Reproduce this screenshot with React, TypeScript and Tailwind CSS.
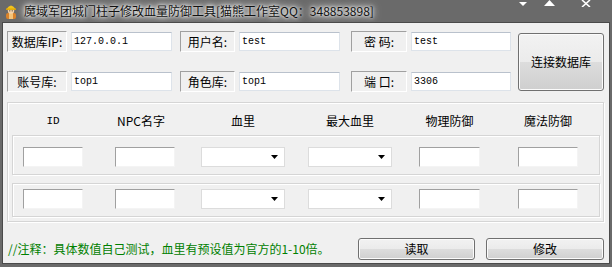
import React from "react";

const Label = ({ text, w, className = "" }: { text: string; w: string; className?: string }) => (
  <div
    className={`${w} h-[21px] flex items-center justify-center border border-t-[#a0a0a0] border-l-[#a0a0a0] border-r-[#ffffff] border-b-[#ffffff] text-[12px] leading-[14px] text-black whitespace-nowrap ${className}`}
  >
    {text}
  </div>
);

const TopInput = ({ value, w, className = "" }: { value: string; w: string; className?: string }) => (
  <div
    className={`${w} h-[19px] bg-white border border-[#dde3ea] border-t-[#b9c1cc] flex items-center pl-[2px] font-['Liberation_Mono',monospace] text-[10px] text-black ${className}`}
  >
    {value}
  </div>
);

const SunkenBox = ({ className = "" }: { className?: string }) => (
  <div
    className={`h-[20px] bg-white border border-t-[#a0a0a0] border-l-[#a0a0a0] border-r-[#f4f4f4] border-b-[#f4f4f4] ${className}`}
  />
);

const Combo = ({ className = "" }: { className?: string }) => (
  <div
    className={`w-[84px] h-[20px] bg-white border border-[#dcdcdc] flex items-center justify-end pr-[6px] ${className}`}
  >
    <svg width="7" height="4" viewBox="0 0 7 4">
      <polygon points="0,0 7,0 3.5,4" fill="#000" />
    </svg>
  </div>
);

const Btn = ({ text, className = "" }: { text: string; className?: string }) => (
  <div
    className={`rounded-[3px] border border-[#707070] bg-[linear-gradient(#f2f2f2,#ebebeb_50%,#dddddd_50%,#cfcfcf)] shadow-[inset_0_0_0_1px_#fbfbfb] flex items-center justify-center text-[12px] text-black ${className}`}
  >
    {text}
  </div>
);

const DataRow = ({ className = "" }: { className?: string }) => (
  <div
    className={`ml-[4px] mr-[3px] border border-[#d5d5d5] shadow-[inset_1px_1px_0_#ffffff,1px_1px_0_#ffffff] flex items-start ${className}`}
  >
    <SunkenBox className="ml-[10px] w-[60px]" />
    <SunkenBox className="ml-[32px] w-[60px]" />
    <Combo className="ml-[26px]" />
    <Combo className="ml-[23px]" />
    <SunkenBox className="ml-[27px] w-[61px]" />
    <SunkenBox className="ml-[38px] w-[60px]" />
  </div>
);

const Header = ({ text, className = "" }: { text: string; className?: string }) => (
  <div className={`flex justify-center whitespace-nowrap ${className}`}>{text}</div>
);

export default function App() {
  return (
    <div className="w-[612px] h-[267px] bg-[#6a6a6a] flex flex-col overflow-hidden font-['Noto_Sans_CJK_SC',sans-serif]">
      {/* Title bar */}
      <div className="h-[22px] flex items-start shrink-0">
        <svg className="ml-[4px] mt-[3px]" width="14" height="16" viewBox="0 0 14 16">
          <rect x="2" y="10" width="10" height="6" rx="2" fill="#d9822b" />
          <rect x="5" y="10" width="4" height="6" fill="#f3c37a" />
          <circle cx="7" cy="7.5" r="3.2" fill="#f6d2a6" />
          <path d="M2.5 6 Q7 -1 11.5 6 Z" fill="#f2c21c" />
          <rect x="2" y="5.5" width="10" height="1.4" fill="#e0a800" />
          <circle cx="5.8" cy="7.8" r="0.6" fill="#333" />
          <circle cx="8.2" cy="7.8" r="0.6" fill="#333" />
        </svg>
        <div className="ml-[6px] mt-[2px] text-[12px] leading-[18px] text-[#111] [text-shadow:0_0_6px_#ffffff,0_0_10px_#ffffff,0_0_3px_#ffffff] whitespace-nowrap">
          魔域军团城门柱子修改血量防御工具[猫熊工作室QQ：348853898]
        </div>
        <div className="ml-auto mr-[21px] flex items-start">
          <svg className="mt-[2px]" width="8" height="4" viewBox="0 0 8 4">
            <polygon points="0,0 8,0 4,4" fill="#fff" />
          </svg>
          <svg className="ml-[17px]" width="11" height="6" viewBox="0 0 11 6">
            <polygon points="0,6 11,6 5.5,0" fill="#fff" />
          </svg>
          <svg className="ml-[26px]" width="10" height="7" viewBox="0 0 10 7">
            <path d="M1 0 L9 7 M9 0 L1 7" stroke="#fff" strokeWidth="1.6" />
          </svg>
        </div>
      </div>

      {/* Client area */}
      <div className="mx-[2px] mb-[3px] flex-1 bg-[#f0f0f0] border border-[#4a4a4a] flex flex-col">
        {/* Top section */}
        <div className="flex pl-[4px] pt-[8px]">
          <div className="flex flex-col gap-[19px]">
            <div className="flex items-center">
              <Label text="数据库IP:" w="w-[60px]" />
              <TopInput value="127.0.0.1" w="w-[101px]" className="ml-[4px]" />
              <Label text="用户名:" w="w-[55px]" className="ml-[8px]" />
              <TopInput value="test" w="w-[101px]" className="ml-[4px]" />
              <Label text="密 码:" w="w-[56px]" className="ml-[11px]" />
              <TopInput value="test" w="w-[100px]" className="ml-[4px]" />
            </div>
            <div className="flex items-center">
              <Label text="账号库:" w="w-[60px]" />
              <TopInput value="top1" w="w-[101px]" className="ml-[4px]" />
              <Label text="角色库:" w="w-[55px]" className="ml-[8px]" />
              <TopInput value="top1" w="w-[101px]" className="ml-[4px]" />
              <Label text="端 口:" w="w-[56px]" className="ml-[11px]" />
              <TopInput value="3306" w="w-[100px]" className="ml-[4px]" />
            </div>
          </div>
          <Btn text="连接数据库" className="ml-[7px] mt-[2px] w-[86px] h-[58px]" />
        </div>

        {/* Group box */}
        <div className="mt-[10px] ml-[4px] mr-[5px] border border-[#d5d5d5] shadow-[inset_1px_1px_0_#ffffff,1px_1px_0_#ffffff] pb-[4px]">
          <div className="flex pl-[5px] pt-[10px] text-[12px] leading-[16px] text-black">
            <Header text="ID" className="ml-[10px] w-[60px] font-['Liberation_Mono',monospace] text-[11px]" />
            <Header text="NPC名字" className="ml-[32px] w-[60px] pr-[8px]" />
            <Header text="血里" className="ml-[26px] w-[84px]" />
            <Header text="最大血里" className="ml-[23px] w-[84px]" />
            <Header text="物理防御" className="ml-[27px] w-[61px]" />
            <Header text="魔法防御" className="ml-[38px] w-[60px]" />
          </div>
          <DataRow className="mt-[6px] h-[40px] pt-[11px]" />
          <DataRow className="mt-[8px] h-[34px] pt-[5px]" />
        </div>

        {/* Bottom */}
        <div className="flex items-center mt-[auto] mb-[3px] pl-[5px]">
          <div className="text-[12px] text-[#008000] whitespace-nowrap">
            //注释：具体数值自己测试，血里有预设值为官方的1-10倍。
          </div>
          <Btn text="读取" className="ml-auto w-[117px] h-[22px]" />
          <Btn text="修改" className="ml-[11px] mr-[5px] w-[118px] h-[22px]" />
        </div>
      </div>
    </div>
  );
}
